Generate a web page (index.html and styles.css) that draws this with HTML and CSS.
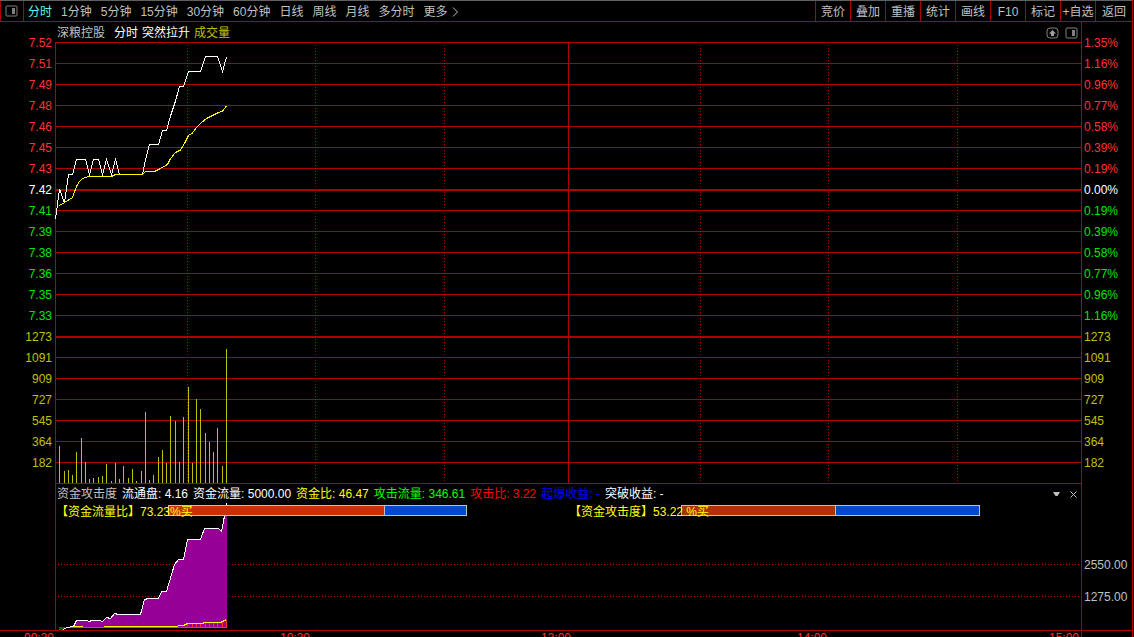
FILE: index.html
```html
<!DOCTYPE html>
<html lang="zh-CN">
<head>
<meta charset="utf-8">
<meta name="viewport" content="width=device-width, initial-scale=1">
<title>深粮控股 分时</title>
<link rel="stylesheet" href="styles.css">
</head>
<body>
<div class="app">
  <header class="toolbar">
    <button class="panel-toggle" aria-label="侧栏">
      <svg width="13" height="12" viewBox="0 0 13 12"><rect x="1" y="1" width="11" height="10" rx="1" fill="none" stroke="#808080"/><rect x="7" y="3" width="3" height="6" fill="#808080"/></svg>
    </button>
    <nav class="periods">
      <button class="active">分时</button>
      <button>1分钟</button>
      <button>5分钟</button>
      <button>15分钟</button>
      <button>30分钟</button>
      <button>60分钟</button>
      <button>日线</button>
      <button>周线</button>
      <button>月线</button>
      <button>多分时</button>
      <button class="more">更多<svg width="7" height="10" viewBox="0 0 7 10"><path d="M1 .5 5.500 5 1 9.500" fill="none" stroke="#c0c0c0"/></svg></button>
    </nav>
    <div class="tools">
      <button>竞价</button>
      <button>叠加</button>
      <button>重播</button>
      <button>统计</button>
      <button>画线</button>
      <button>F10</button>
      <button>标记</button>
      <button>+自选</button>
      <button>返回</button>
    </div>
  </header>

  <main class="charts">
    <ul class="axis axis-left">
      <li class="up">7.52</li><li class="up">7.51</li><li class="up">7.49</li><li class="up">7.48</li><li class="up">7.46</li><li class="up">7.45</li><li class="up">7.43</li>
      <li class="flat">7.42</li>
      <li class="down">7.41</li><li class="down">7.39</li><li class="down">7.38</li><li class="down">7.36</li><li class="down">7.35</li><li class="down">7.33</li>
      <li class="vol">1273</li><li class="vol">1091</li><li class="vol">909</li><li class="vol">727</li><li class="vol">545</li><li class="vol">364</li><li class="vol">182</li>
    </ul>

    <section class="price">
      <div class="title">
        <span class="name">深粮控股</span>
        <span class="flat">分时</span>
        <span class="flat">突然拉升</span>
        <span class="vol">成交量</span>
        <div class="title-actions">
          <button aria-label="上移"><svg width="13" height="12" viewBox="0 0 13 12"><rect x="1" y="1" width="11" height="10" rx="3" fill="none" stroke="#808080"/><path d="M6.500 3 10 6.500H8V9H5V6.500H3Z" fill="#a0a0a0"/></svg></button>
          <button aria-label="侧栏"><svg width="13" height="12" viewBox="0 0 13 12"><rect x="1" y="1" width="11" height="10" rx="1" fill="none" stroke="#808080"/><rect x="7" y="3" width="3" height="6" fill="#808080"/></svg></button>
        </div>
      </div>
      <svg class="plot price-plot" viewBox="55 42 1026 442" preserveAspectRatio="none">
        <g class="grid">
          <path d="M55 42.500H1081M55 63.500H1081M55 84.500H1081M55 105.500H1081M55 126.500H1081M55 147.500H1081M55 168.500H1081M55 210.500H1081M55 231.500H1081M55 252.500H1081M55 273.500H1081M55 294.500H1081M55 315.500H1081M55 357.500H1081M55 378.500H1081M55 399.500H1081M55 420.500H1081M55 441.500H1081M55 462.500H1081M55 483.500H1081M55.500 42V484M568.500 42V484"/>
          <path class="thick" d="M55 190H1081M55 337H1081"/>
          <path class="dots" d="M187.500 45V484M315.500 45V484M444.500 45V484M700.500 45V484M828.500 45V484M957.500 45V484"/>
        </g>
        <path class="volume" d="M59.500 446V483M64.500 471V483M68.500 470V483M72.500 475V483M76.500 452V483M81.500 438V483M85.500 462V483M89.500 479V483M93.500 478V483M98.500 477V483M102.500 476V483M106.500 464V483M111.500 481V483M115.500 463V483M119.500 479V483M123.500 466V483M128.500 478V483M132.500 469V483M136.500 481V483M141.500 471V483M145.500 412V483M149.500 480V483M153.500 475V483M158.500 457V483M162.500 450V483M166.500 463V483M170.500 416V483M175.500 421V483M179.500 462V483M183.500 417V483M188.500 387V483M192.500 463V483M196.500 399V483M200.500 409V483M205.500 433V483M209.500 442V483M213.500 452V483M217.500 428V483M222.500 466V483M226.500 349V483"/>
        <polyline class="line-white" points="55.500,219 57,208 59.500,189 64.500,203 68.500,174.500 72.500,174.500 76.500,159.500 85.500,159.500 89.500,174.500 93.500,159.500 98.500,159.500 102.500,174.500 106.500,159.500 111.500,174.500 115.500,159.500 119.500,174.500 142.500,174.500 145.500,160 149.500,144.500 158.500,144.500 162.500,130.500 166.500,130.500 170.500,116 175.500,101 179.500,86.500 183.500,86.500 188.500,71.500 200.500,71.500 205.500,56.500 217.500,56.500 222.500,71.500 226.500,57"/>
        <polyline class="line-yellow" points="59.500,205.500 64.500,202.500 72.500,197.500 76.500,186.500 79.500,181.500 82.500,178.500 88.500,176.500 111.500,176.500 115.500,174.500 142.500,174.500 145.500,171.500 154.500,171.500 158.500,169.500 167.500,164.500 170.500,158.500 175.500,152.500 180.500,150 184.500,143.500 188.500,135.500 192.500,133 196.500,127.500 201.500,122.500 206.500,118.500 218.500,112.500 222.500,111 226.500,106"/>
      </svg>
    </section>

    <ul class="axis axis-right">
      <li class="up">1.35%</li><li class="up">1.16%</li><li class="up">0.96%</li><li class="up">0.77%</li><li class="up">0.58%</li><li class="up">0.39%</li><li class="up">0.19%</li>
      <li class="flat">0.00%</li>
      <li class="down">0.19%</li><li class="down">0.39%</li><li class="down">0.58%</li><li class="down">0.77%</li><li class="down">0.96%</li><li class="down">1.16%</li>
      <li class="vol">1273</li><li class="vol">1091</li><li class="vol">909</li><li class="vol">727</li><li class="vol">545</li><li class="vol">364</li><li class="vol">182</li>
    </ul>

    <section class="indicator">
      <svg class="plot indicator-plot" viewBox="55 484 1026 146" preserveAspectRatio="none">
        <g class="grid">
          <path d="M55.500 484V630"/>
          <path class="dots" d="M58 564.500H1080M58 596.500H1080"/>
        </g>
        <path class="area" d="M66.500 627.500 73.500 626.500 76.500 620.500H86.500L89.500 621.500 91.500 620.500H99.500L102.500 621.500 106.500 617.500 110.500 618.500 114.500 613.500H140.500L144.500 599.500 148.500 598.500H158.500L161.500 591.500H166.500L174.500 564 178.500 559.500H183.500L187.500 539.500H200.500L204.500 528.500H218.500L221.500 531.500 224.500 516H227V627.500Z"/>
        <path class="hatch" d="M187.500 624V627M192.500 624V627M196.500 624V627M200.500 624V627M205.500 623V627M209.500 623V627M213.500 623V627M217.500 623V627M222.500 622V627M226.500 620V627M66 627.500H227"/>
        <polyline class="line-white" points="62.500,630 66.500,627.500 73.500,626.500 76.500,620.500 86.500,620.500 89.500,621.500 91.500,620.500 99.500,620.500 102.500,621.500 106.500,617.500 110.500,618.500 114.500,613.500 118.500,614.500 140.500,614.500 144.500,599.500 148.500,598.500 158.500,598.500 161.500,591.500 166.500,591.500 174.500,564.500 178.500,559.500 183.500,559.500 187.500,539.500 200.500,539.500 204.500,528.500 218.500,528.500 221.500,531.500 224.500,516 226.500,503"/>
        <path class="line-yellow" d="M73 626.500H83M104 626.500H172L183.500 625.500 187.500 623.500H201.500L205.500 622.500H220.500L226.500 619.500"/>
        <path class="marker" d="M59 627H66L62 630H59Z"/>
      </svg>
      <div class="status">
        <span class="name">资金攻击度</span>
        <span class="flat">流通盘: 4.16</span>
        <span class="flat">资金流量: 5000.00</span>
        <span class="bright-yellow">资金比: 46.47</span>
        <span class="bright-green">攻击流量: 346.61</span>
        <span class="bright-red">攻击比: 3.22</span>
        <span class="bright-blue">起爆收益: -</span>
        <span class="flat">突破收益: -</span>
        <div class="status-actions">
          <button aria-label="展开"><svg width="7" height="4" viewBox="0 0 7 4"><path d="M0 0H7L4.500 4H2.500Z" fill="#c0c0c0"/></svg></button>
          <button aria-label="关闭"><svg width="7" height="7" viewBox="0 0 7 7"><path d="M.5.500 6.500 6.500M6.500.500.500 6.500" stroke="#c0c0c0"/></svg></button>
        </div>
      </div>
      <div class="meters">
        <div class="meter">
          <div class="bar"><span class="buy" style="width:72.7%"></span></div>
          <span class="meter-label">【资金流量比】73.23%买</span>
        </div>
        <div class="meter">
          <div class="bar bar-dark"><span class="buy" style="width:52%"></span></div>
          <span class="meter-label">【资金攻击度】53.22 %买</span>
        </div>
      </div>
    </section>

    <ul class="axis axis-money">
      <li>2550.00</li>
      <li>1275.00</li>
    </ul>
  </main>

  <footer class="times">
    <div class="time-labels"><span>09:30</span><span>10:30</span><span>13:00</span><span>14:00</span><span>15:00</span></div>
    <div class="times-end"></div>
  </footer>
</div>
</body>
</html>
```

FILE: styles.css
```css
:root {
  --red: #b00000;
  --gray: #c0c0c0;
  --axis-left: 55px;
  --axis-right: 51px;
}

* { box-sizing: border-box; }

body {
  margin: 0;
  height: 100vh;
  overflow: hidden;
  background: #000;
  color: var(--gray);
  font: 12px/18px "Liberation Sans", "Noto Sans CJK SC", sans-serif;
}

ul { list-style: none; margin: 0; padding: 0; }

button {
  margin: 0;
  padding: 0;
  border: 0;
  background: none;
  color: inherit;
  font: inherit;
  white-space: nowrap;
  cursor: pointer;
}

svg { display: block; }

.app {
  min-height: 100vh;
  margin-right: 1px;
  border-right: 1px solid var(--red);
  display: flex;
  flex-direction: column;
}

.toolbar {
  display: flex;
  height: 22px;
  border-top: 1px solid #606060;
  border-bottom: 1px solid var(--red);
}

.panel-toggle {
  width: 24px;
  padding-left: 4px;
  border-left: 1px solid var(--red);
  border-right: 1px solid var(--red);
}

.periods {
  display: flex;
  gap: 9px;
  padding: 2px 0 0 4px;
}

.periods .active { color: #54fcfc; }

.more {
  display: flex;
  align-items: center;
  gap: 4px;
}

.tools {
  display: flex;
  margin-left: auto;
}

.tools button {
  width: 35px;
  padding-top: 2px;
  border-left: 1px solid var(--red);
}

.tools button:last-child { width: 37px; }

.charts {
  display: grid;
  grid-template-columns: var(--axis-left) minmax(0, 1fr) var(--axis-right);
  border-bottom: 1px solid var(--red);
}

.axis { line-height: 21px; }

.axis-left {
  height: 462px;
  padding: 11px 3px 0 0;
  text-align: right;
}

.axis-right {
  height: 462px;
  padding: 11px 0 0 2px;
  border-left: 1px solid var(--red);
}

.up { color: #ff3232; }
.down { color: #00e600; }
.flat { color: #fff; }
.vol { color: #c0c000; }
.name { color: var(--gray); }
.bright-yellow { color: #ff0; }
.bright-green { color: #0f0; }
.bright-red { color: #f00; }
.bright-blue { color: #00f; }

.title {
  display: flex;
  align-items: center;
  gap: 4px;
  height: 20px;
  padding: 1px 3px 0 2px;
}

.title .name { margin-right: 5px; }

.title-actions {
  display: flex;
  gap: 6px;
  margin-left: auto;
}

.plot { width: 100%; }
.price-plot { height: 442px; }

.plot path,
.plot polyline {
  fill: none;
  stroke-width: 1;
  shape-rendering: crispEdges;
}

.grid path { stroke: var(--red); }
.grid .thick { stroke-width: 2; }
.grid .dots { stroke-dasharray: 1 2; }
.plot .volume { stroke: #c0c000; }
.plot .line-white { stroke: #fff; }
.plot .line-yellow { stroke: #ff0; }
.plot .area { fill: #960096; }
.plot .hatch { stroke: #ff3232; }
.plot .marker { fill: #006400; }

.indicator {
  grid-column: 2;
  position: relative;
  height: 146px;
}

.indicator-plot {
  position: absolute;
  inset: 0;
  height: 100%;
}

.status {
  position: relative;
  display: flex;
  gap: 5px;
  padding: 1px 4px 0 2px;
  white-space: nowrap;
}

.status-actions {
  display: flex;
  align-items: center;
  gap: 10px;
  margin-left: auto;
}

.meters {
  position: relative;
  display: grid;
  grid-template-columns: 1fr 1fr;
}

.meter {
  position: relative;
  color: #ff0;
}

.bar {
  position: absolute;
  top: 2px;
  left: 22%;
  width: 58.300%;
  height: 11px;
  display: flex;
  border: 1px solid var(--gray);
  background: #004bc8;
}

.buy {
  border-right: 1px solid var(--gray);
  background: #c83200;
}

.bar-dark .buy { background: #af3200; }

.meter-label {
  position: relative;
  padding-left: 1px;
  white-space: nowrap;
}

.axis-money {
  padding: 65px 0 0 2px;
  border-left: 1px solid var(--red);
  line-height: 32px;
}

.times {
  display: flex;
  flex: 1;
  padding-left: 24px;
  color: #ff3232;
}

.time-labels {
  flex: 1;
  display: grid;
  grid-template-columns: 256fr 261fr 256fr 252fr 32px;
  line-height: 14px;
}

.times-end {
  width: var(--axis-right);
  border-left: 1px solid var(--red);
}
```
